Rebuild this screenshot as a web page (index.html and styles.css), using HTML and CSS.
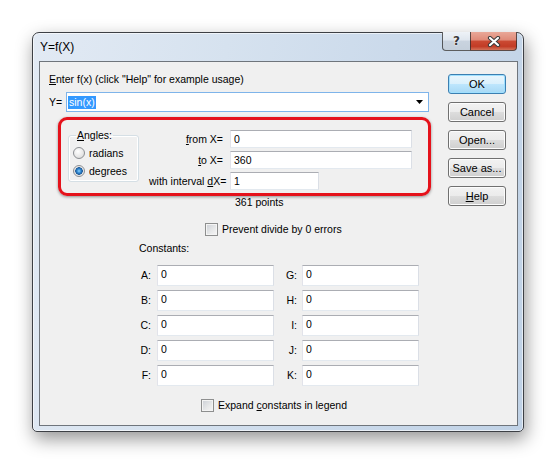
FILE: index.html
```html
<!DOCTYPE html>
<html>
<head>
<meta charset="utf-8">
<title>Y=f(X)</title>
<link rel="stylesheet" href="styles.css">
</head>
<body>
<div class="window">
  <div class="titlebar">
    <span class="title">Y=f(X)</span>
    <div class="caption-buttons">
      <div class="cap-btn help-btn"><span class="qmark">?</span></div>
      <div class="cap-btn close-btn">
        <svg width="14" height="11" viewBox="0 0 14 11">
          <path d="M3 2 L11 9 M11 2 L3 9" stroke="#3a3a3a" stroke-width="4.2" stroke-linecap="round" fill="none"/>
          <path d="M3 2 L11 9 M11 2 L3 9" stroke="#ffffff" stroke-width="2.2" stroke-linecap="round" fill="none"/>
        </svg>
      </div>
    </div>
  </div>
  <div class="client">
    <div class="main">
      <div class="prompt"><u>E</u>nter f(x) (click "Help" for example usage)</div>
      <div class="yrow">
        <span class="ylabel">Y=</span>
        <div class="combo">
          <span class="sel">sin(x)</span>
          <svg class="arrow" width="7" height="4" viewBox="0 0 7 4"><polygon points="0,0 7,0 3.5,4" fill="#000"/></svg>
        </div>
      </div>
      <div class="redbox">
        <fieldset class="angles">
          <legend><u>A</u>ngles:</legend>
          <div class="radio-row"><span class="radio"></span><span>radians</span></div>
          <div class="radio-row"><span class="radio checked"></span><span>degrees</span></div>
        </fieldset>
        <div class="range">
          <span class="rlabel"><u>f</u>rom X=</span><div class="edit">0</div>
          <span class="rlabel"><u>t</u>o X=</span><div class="edit">360</div>
          <span class="rlabel">with interval <u>d</u>X=</span><div class="edit short">1</div>
        </div>
      </div>
      <div class="points">361 points</div>
      <div class="check-row prevent"><span class="checkbox"></span><span>Prevent divide by 0 errors</span></div>
      <div class="constants-label">Constants:</div>
      <div class="constants">
        <span class="clabel">A:</span><div class="edit">0</div><span class="clabel second">G:</span><div class="edit">0</div>
        <span class="clabel">B:</span><div class="edit">0</div><span class="clabel second">H:</span><div class="edit">0</div>
        <span class="clabel">C:</span><div class="edit">0</div><span class="clabel second">I:</span><div class="edit">0</div>
        <span class="clabel">D:</span><div class="edit">0</div><span class="clabel second">J:</span><div class="edit">0</div>
        <span class="clabel">F:</span><div class="edit">0</div><span class="clabel second">K:</span><div class="edit">0</div>
      </div>
      <div class="check-row expand"><span class="checkbox"></span><span>Expand <u>c</u>onstants in legend</span></div>
    </div>
    <div class="buttons">
      <div class="btn default">OK</div>
      <div class="btn">Cancel</div>
      <div class="btn">Open...</div>
      <div class="btn">Save as...</div>
      <div class="btn"><span><u>H</u>elp</span></div>
    </div>
  </div>
</div>
</body>
</html>
```
FILE: styles.css
```css
* { box-sizing: border-box; }
html, body { margin: 0; padding: 0; background: #ffffff; }
body {
  width: 557px;
  height: 466px;
  overflow: hidden;
  font-family: "Liberation Sans", Arial, sans-serif;
  font-size: 10.5px;
  color: #000;
}
u { text-decoration: underline; text-underline-offset: 1px; }

.window {
  margin: 32px 0 0 32px;
  width: 492px;
  height: 400px;
  border: 1px solid #3d4045;
  border-radius: 7px 7px 5px 5px;
  background: linear-gradient(100deg, #e2eaf4 0%, #d6e2ef 35%, #cbdaeb 65%, #c0d2e6 100%);
  box-shadow: 2px 7px 18px rgba(0,0,0,0.42), inset 0 0 0 1px rgba(255,255,255,0.6);
  padding: 0 5px 5px 6px;
  display: flex;
  flex-direction: column;
}

.titlebar {
  height: 28px;
  display: flex;
  justify-content: space-between;
  align-items: flex-start;
}
.title {
  font-size: 12px;
  line-height: 14px;
  margin-top: 7px;
  padding-left: 1px;
  color: #000;
}
.caption-buttons {
  display: flex;
  margin-top: -1px;
  margin-right: 1px;
}
.cap-btn {
  height: 19px;
  border: 1px solid rgba(45,45,45,0.75);
  border-top: none;
  display: flex;
  align-items: center;
  justify-content: center;
}
.help-btn {
  width: 28px;
  border-right: none;
  border-radius: 0 0 0 4px;
  background: linear-gradient(#eef2f7 0%, #dfe6ee 45%, #c9d3df 50%, #c4cfdb 100%);
}
.qmark {
  font-family: "DejaVu Sans", sans-serif;
  font-weight: bold;
  font-size: 12px;
  line-height: 12px;
  color: #3a3a3a;
  text-shadow: 0 0 1px #fff, 0 0 2px #fff;
}
.close-btn {
  width: 47px;
  border-radius: 0 0 4px 0;
  background: linear-gradient(#e9a898 0%, #df8a78 45%, #cb4a33 50%, #c23c26 80%, #d2735a 100%);
}

.client {
  height: 365px;
  border: 1px solid #6f757c;
  background: #f0f0f0;
  display: flex;
}
.main { flex: 1; }

.prompt {
  margin: 11px 0 0 9px;
  line-height: 13px;
}
.yrow {
  display: flex;
  align-items: center;
  margin: 6px 0 0 9px;
  height: 20px;
}
.ylabel { width: 17px; }
.combo {
  width: 363px;
  height: 20px;
  border: 1px solid #7eb4ea;
  background: #fff;
  display: flex;
  align-items: center;
  justify-content: space-between;
  padding: 0 5px 0 1px;
}
.sel {
  background: #3399ff;
  color: #fff;
  line-height: 13px;
  padding: 0 1px;
}
.arrow { display: block; }

.redbox {
  margin: 5px 0 0 18px;
  width: 373px;
  height: 79px;
  border: 3px solid #e5121b;
  border-radius: 9px;
  box-shadow: 0 1px 3px rgba(0,0,0,0.4);
  display: flex;
  align-items: flex-start;
}
.angles {
  margin: 9px 0 0 7px;
  width: 71px;
  min-width: 0;
  padding: 2px 0 1px 4px;
  border: 1px solid #d5dfe5;
  border-radius: 3px;
  box-shadow: inset 0 0 0 1px #ffffff;
}
.angles legend {
  padding: 0 1px;
  margin-left: 3px;
  line-height: 13px;
}
.radio-row {
  display: flex;
  align-items: center;
  height: 18px;
  gap: 4px;
}
.radio {
  width: 12px;
  height: 12px;
  border-radius: 50%;
  border: 1px solid #8c8f93;
  background: radial-gradient(circle at 40% 35%, #ffffff 0%, #e6e6e6 60%, #d2d2d2 100%);
}
.radio.checked {
  background: radial-gradient(circle at 50% 50%, #8fd6ff 0px, #2f86d0 2px, #1d5a98 3.5px, #e4e4e4 4px, #f6f6f6 100%);
}

.range {
  margin: 10px 0 0 10px;
  display: grid;
  grid-template-columns: 74px 182px;
  column-gap: 7px;
  row-gap: 3px;
}
.rlabel {
  text-align: right;
  line-height: 18px;
  white-space: nowrap;
}
.edit {
  height: 18px;
  background: #fff;
  border: 1px solid;
  border-color: #abadb3 #dbdfe6 #e3e9ef #e2e3ea;
  padding: 0 0 0 3px;
  line-height: 16px;
}
.edit.short { width: 89px; }

.points {
  margin: 0 0 0 195px;
  line-height: 13px;
}
.check-row {
  display: flex;
  align-items: center;
  gap: 4px;
  height: 13px;
  line-height: 13px;
}
.prevent { margin: 14px 0 0 165px; }
.checkbox {
  width: 13px;
  height: 13px;
  border: 1px solid #8e8f8f;
  background: linear-gradient(135deg, #cbcfd5 0%, #e8e9ea 60%, #f6f6f6 100%);
  box-shadow: inset 0 0 0 1px #f4f4f4;
}
.constants-label {
  margin: 6px 0 0 99px;
  line-height: 13px;
}
.constants {
  margin: 10px 0 0 90px;
  display: grid;
  grid-template-columns: 27px 117px 28px 117px;
  row-gap: 4px;
}
.constants .edit {
  height: 21px;
  line-height: 17px;
}
.clabel {
  text-align: right;
  padding-right: 6px;
  line-height: 21px;
}
.clabel.second { padding-right: 5px; }
.expand { margin: 13px 0 0 161px; }

.buttons {
  width: 58px;
  margin: 12px 11px 0 0;
  display: flex;
  flex-direction: column;
  gap: 8px;
}
.btn {
  height: 20px;
  border: 1px solid #707070;
  border-radius: 3px;
  background: linear-gradient(#f2f2f2 0%, #ebebeb 50%, #dddddd 50%, #cfcfcf 100%);
  box-shadow: inset 0 0 0 1px #fcfcfc;
  font-size: 11px;
  display: flex;
  align-items: center;
  justify-content: center;
}
.btn.default {
  border-color: #3c7fb1;
  background: linear-gradient(#eaf6fd 0%, #d9f0fc 50%, #bee6fd 50%, #a7d9f5 100%);
  box-shadow: inset 0 0 0 1px #9fe0ff;
}
```
